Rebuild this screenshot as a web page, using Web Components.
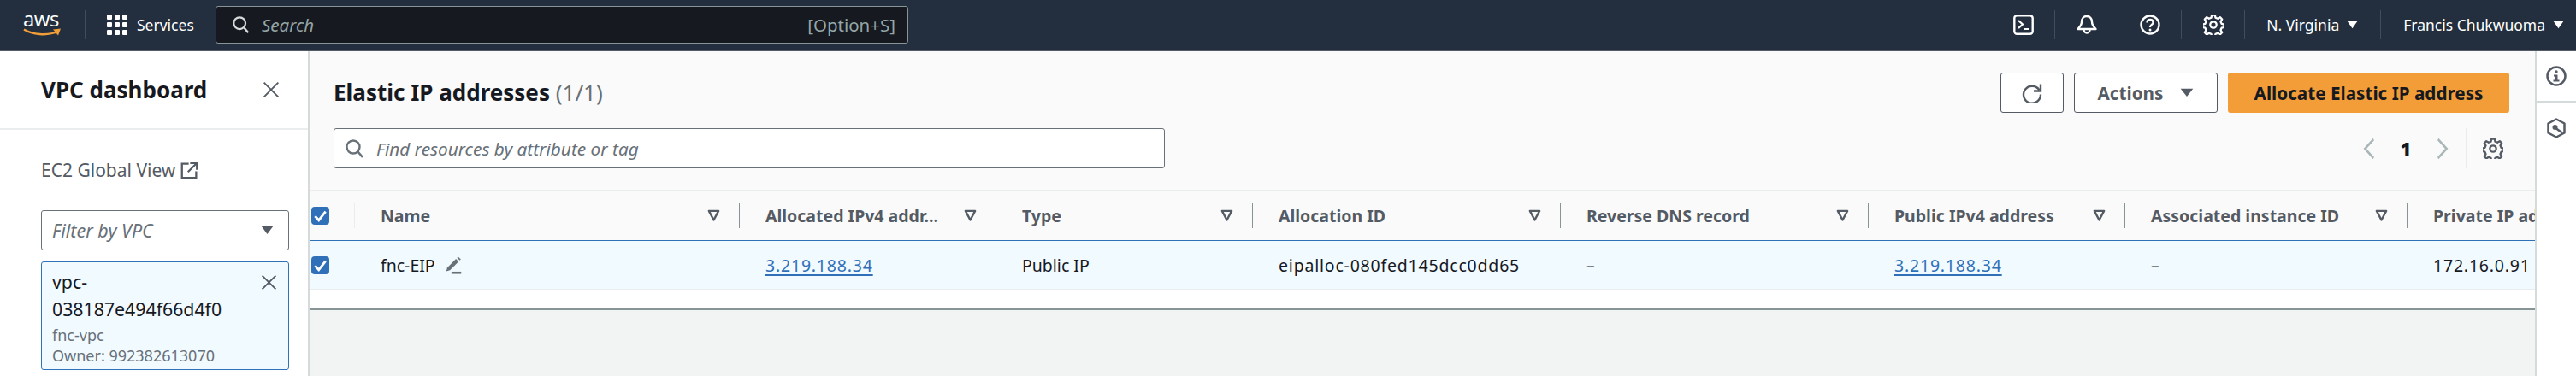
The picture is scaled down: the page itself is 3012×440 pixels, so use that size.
<!DOCTYPE html>
<html lang="en"><head><meta charset="utf-8"><title>Elastic IP addresses</title>
<style>
html,body{margin:0;padding:0;background:#fff}
body{width:3012px;height:440px;overflow:hidden;font-family:"Noto Sans","Open Sans",sans-serif;color:#16191f}
.app{display:flex;height:380px}
</style></head><body>
<aws-topbar></aws-topbar>
<div class="app">
  <side-nav></side-nav>
  <eip-main>
    <eip-table></eip-table>
  </eip-main>
  <tools-rail></tools-rail>
</div>
<script>
const ICONS={
 search:'<circle cx="10" cy="10" r="7.5" fill="none" stroke="currentColor" stroke-width="2.4"/><path d="M15.5 15.5 21 22" fill="none" stroke="currentColor" stroke-width="2.6"/>',
 close:'<path d="M2 2 22 22M22 2 2 22" fill="none" stroke="currentColor" stroke-width="2.3"/>',
 caret:'<path d="M1 3H23L12 19Z" fill="currentColor"/>',
 external:'<path d="M11 3H2V22H21V13M13 2H22V11M22 2 10 14" fill="none" stroke="currentColor" stroke-width="2.6"/>',
 gear:'<path d="M10.200 1.500h3.600l.7 3.100 2.600 1.100 2.700-1.700 2.400 2.500-1.700 2.700 1.100 2.600 3 .7v3.400l-3 .7-1.100 2.600 1.700 2.700-2.400 2.500-2.700-1.700-2.600 1.100-.7 3.100h-3.600l-.7-3.100-2.600-1.100-2.700 1.700-2.400-2.500 1.700-2.700-1.100-2.600-3-.7v-3.400l3-.7 1.100-2.600-1.700-2.700 2.400-2.500 2.700 1.700 2.600-1.100z" transform="translate(0 -.9)" fill="none" stroke="currentColor" stroke-width="2.300" stroke-linejoin="round"/><circle cx="12" cy="12" r="3.700" fill="none" stroke="currentColor" stroke-width="2.300"/>',
 terminal:'<rect x="1.300" y="1.300" width="21.400" height="21.400" rx="3" fill="none" stroke="currentColor" stroke-width="2.400"/><path d="M6 7l5 4.500-5 4.500M12.500 17H18" fill="none" stroke="currentColor" stroke-width="2.200"/>',
 bell:'<path d="M12 2c-4 0-6 3-6 6.500 0 4-2 6-4.500 8.500h21C20 14.500 18 12.500 18 8.500 18 5 16 2 12 2Z" fill="none" stroke="currentColor" stroke-width="2.400" stroke-linejoin="round"/><path d="M8.500 18a3.500 3.500 0 0 0 7 0" fill="none" stroke="currentColor" stroke-width="2.400"/>',
 help:'<circle cx="12" cy="12" r="10.500" fill="none" stroke="currentColor" stroke-width="2.400"/><path d="M8.500 9.500c0-2.200 1.500-3.500 3.500-3.500s3.500 1.300 3.500 3.200c0 2.800-3.500 2.800-3.500 5.800" fill="none" stroke="currentColor" stroke-width="2.300"/><circle cx="12" cy="18" r="1.500" fill="currentColor"/>',
 refresh:'<path d="M20.500 8.500A10 10 0 1 0 22 13.500" fill="none" stroke="currentColor" stroke-width="2.400"/><path d="M22 1.500V9.500H14" fill="none" stroke="currentColor" stroke-width="2.400"/>',
 left:'<path d="M20 1 5 12 20 23" fill="none" stroke="currentColor" stroke-width="3.200"/>',
 right:'<path d="M4 1 19 12 4 23" fill="none" stroke="currentColor" stroke-width="3.200"/>',
 filter:'<path d="M3 3H21L12 20Z" fill="none" stroke="currentColor" stroke-width="3.800" stroke-linejoin="round"/>',
 pencil:'<path d="M2 20l1.500-5L15 3.500l3.500 3.500L7 18.500Z" fill="currentColor"/><path d="M16.500 2l1.500-1.500 3.500 3.500L20 5.500Z" fill="currentColor"/><rect x="9" y="20.500" width="13" height="3" fill="currentColor"/>',
 info:'<circle cx="12" cy="12" r="10.500" fill="none" stroke="currentColor" stroke-width="2.500"/><circle cx="12" cy="7" r="1.700" fill="currentColor"/><path d="M9 10.500h4.500V16.500H15.500V18.500H8.500V16.500H10.500V12.500H9Z" fill="currentColor"/>',
 hex:'<path d="M12 1.500 21.500 6.500V17.500L12 22.500 2.500 17.500V6.500Z" fill="none" stroke="currentColor" stroke-width="2.500" stroke-linejoin="round"/><circle cx="10.500" cy="11" r="3" fill="currentColor"/><path d="M12 12.500 19 17.500" fill="none" stroke="currentColor" stroke-width="2.500"/>',
 grid:'<g fill="currentColor"><rect x="0" y="0" width="6" height="6" rx="1"/><rect x="9" y="0" width="6" height="6" rx="1"/><rect x="18" y="0" width="6" height="6" rx="1"/><rect x="0" y="9" width="6" height="6" rx="1"/><rect x="9" y="9" width="6" height="6" rx="1"/><rect x="18" y="9" width="6" height="6" rx="1"/><rect x="0" y="18" width="6" height="6" rx="1"/><rect x="9" y="18" width="6" height="6" rx="1"/><rect x="18" y="18" width="6" height="6" rx="1"/></g>',
 check:'<path d="M5 12.500 10 18 19 6.500" fill="none" stroke="#fff" stroke-width="3.200"/>'
};
class UiIcon extends HTMLElement{
 connectedCallback(){
  const s=this.getAttribute('size')||24,n=this.getAttribute('name');
  const w=this.getAttribute('w')||s,h=this.getAttribute('h')||s;
  this.attachShadow({mode:'open'}).innerHTML=`<style>:host{display:inline-flex;flex:none;line-height:0}svg{display:block}</style><svg width="${w}" height="${h}" viewBox="0 0 24 24" preserveAspectRatio="none" aria-hidden="true">${ICONS[n]||''}</svg>`;
 }
}
customElements.define('ui-icon',UiIcon);

class UiCheck extends HTMLElement{
 constructor(){super();this.attachShadow({mode:'open'}).innerHTML=`<style>:host{display:flex;width:21px;height:21px;border-radius:4px;background:#2f70b8}</style><ui-icon name="check" size="21"></ui-icon>`}
}
customElements.define('ui-check',UiCheck);

class AwsTopbar extends HTMLElement{
 constructor(){super();this.attachShadow({mode:'open'}).innerHTML=`<style>
 :host{display:flex;align-items:center;height:58px;border-bottom:2px solid #545b64;background:#232f3e;color:#fff;font:18px/24px "Noto Sans",sans-serif}
 .logo{width:99px;padding-left:27px;box-sizing:border-box;flex:none;display:flex;flex-direction:column}
 .aws{font:24px/22px "Open Sans",sans-serif;letter-spacing:-.5px;margin-top:-4px;width:46px}
 .sep{width:1px;height:34px;background:#414d5c;flex:none}
 .sv{display:flex;align-items:center;gap:11px;margin-left:25px;width:127px;flex:none;font-size:17.500px}
 .search{width:810px;height:44px;box-sizing:border-box;flex:none;background:#16191f;border:1px solid #879596;border-radius:3px;display:flex;align-items:center;padding:0 14px 0 18px;color:#d5dbdb}
 .search i{flex:1;color:#95a5a6;margin-left:13px;font-size:20.500px}
 .search b{font-weight:400;color:#95a5a6;font-size:20.500px}
 .gap{flex:1}
 .ic{display:flex;justify-content:center;flex:none;width:73px}
 .reg{display:flex;align-items:center;gap:9px;flex:none;font-size:17.500px}
 </style>
 <div class="logo"><span class="aws">aws</span><svg width="46" height="11" viewBox="0 0 46 11"><path d="M1 1.500C10 7 28 10 41 3.500" fill="none" stroke="#f29d38" stroke-width="2.400"/><path d="M36 1.500 45 .5 42 8.500" fill="#f29d38" transform="translate(-1 0)"/></svg></div>
 <span class="sep"></span>
 <div class="sv"><ui-icon name="grid" size="24"></ui-icon><span>Services</span></div>
 <div class="search"><ui-icon name="search" size="22"></ui-icon><i>Search</i><b>[Option+S]</b></div>
 <span class="gap"></span>
 <div class="ic" style="width:48px;justify-content:flex-start"><ui-icon name="terminal" size="24"></ui-icon></div><span class="sep"></span>
 <div class="ic"><ui-icon name="bell" size="24"></ui-icon></div><span class="sep"></span>
 <div class="ic"><ui-icon name="help" size="24"></ui-icon></div><span class="sep"></span>
 <div class="ic"><ui-icon name="gear" size="24"></ui-icon></div><span class="sep"></span>
 <div class="reg" style="margin-left:25px;width:133px"><span>N. Virginia</span><ui-icon name="caret" w="13" h="13"></ui-icon></div><span class="sep"></span>
 <div class="reg" style="margin-left:26px;margin-right:14px"><span>Francis Chukwuoma</span><ui-icon name="caret" w="13" h="13"></ui-icon></div>`}
}
customElements.define('aws-topbar',AwsTopbar);

class SideNav extends HTMLElement{
 constructor(){super();this.attachShadow({mode:'open'}).innerHTML=`<style>
 :host{display:block;width:362px;flex:none;box-sizing:border-box;border-right:2px solid #d5dbdb;background:#fff;overflow:hidden;font-family:"Noto Sans",sans-serif}
 .head{display:flex;justify-content:space-between;align-items:center;height:90px;padding:0 33px 0 48px;border-bottom:2px solid #eaeded}
 h2{margin:0;font-size:26px;font-weight:700;color:#16191f}
 .body{padding:0 22px 0 48px}
 .glob{display:flex;align-items:center;gap:6px;height:94px;color:#545b64;font-size:21px}
 .fb{display:flex;align-items:center;justify-content:space-between;height:47px;box-sizing:border-box;border:1px solid #687078;border-radius:3px;padding:0 17px 0 12px;font-style:italic;color:#687078;font-size:21.500px}
 .card{position:relative;margin-top:13px;height:127px;box-sizing:border-box;border:1px solid #2f72b8;border-radius:3px;background:#f1faff;padding:7px 12px;color:#16191f;font-size:21.300px;line-height:32px}
 .card small{display:block;font-size:18px;line-height:24px;color:#687078}
 .card small:first-of-type{margin-top:2px}
 .x{position:absolute;top:14px;right:13px;color:#545b64}
 </style>
 <div class="head"><h2>VPC dashboard</h2><ui-icon name="close" size="20" style="color:#545b64"></ui-icon></div>
 <div class="body">
  <div class="glob"><span>EC2 Global View</span><ui-icon name="external" size="21"></ui-icon></div>
  <div class="fb"><span>Filter by VPC</span><ui-icon name="caret" w="15" h="14" style="color:#545b64"></ui-icon></div>
  <div class="card">vpc-<br>038187e494f66d4f0<small>fnc-vpc</small><small>Owner: 992382613070</small><ui-icon class="x" name="close" size="19"></ui-icon></div>
 </div>`}
}
customElements.define('side-nav',SideNav);

class EipMain extends HTMLElement{
 constructor(){super();this.attachShadow({mode:'open'}).innerHTML=`<style>
 :host{display:flex;flex-direction:column;flex:1;min-width:0;background:#f2f3f3;overflow:hidden;font-family:"Noto Sans",sans-serif}
 .top{background:#fafafa;padding:25px 30px 25px 28px;border-bottom:1px solid #eaeded}
 .r1{display:flex;align-items:center;height:47px}
 h1{margin:-2px 0 0;font-size:26px;font-weight:700;flex:1;color:#16191f}
 h1 span{font-weight:400;color:#687078}
 .btn{box-sizing:border-box;height:47px;display:flex;align-items:center;justify-content:center;border:1px solid #545b64;border-radius:3px;background:#fff;color:#545b64;font-weight:700;font-size:20.700px;margin-left:12px}
 .pri{background:#f29d38;border:0;color:#16191f;width:329px}
 .r2{display:flex;align-items:center;height:47px;margin-top:18px;justify-content:space-between;padding-right:7px}
 .find{width:972px;height:47px;box-sizing:border-box;border:1px solid #687078;border-radius:3px;background:#fff;display:flex;align-items:center;gap:13px;padding:0 12px;color:#687078;font-size:20.800px;font-style:italic}
 .pg{display:flex;align-items:center;color:#aab7b8;height:47px;font-size:21px;font-weight:700}
 .pg b{color:#16191f;width:70px;text-align:center}
 .pg .g{margin-left:19px;border-left:1px solid #eaeded;height:47px;width:43px;display:flex;align-items:center;justify-content:flex-end;color:#545b64}
 </style>
 <div class="top">
  <div class="r1"><h1>Elastic IP addresses <span>(1/1)</span></h1>
   <div class="btn" style="width:74px"><ui-icon name="refresh" size="24"></ui-icon></div>
   <div class="btn" style="width:168px;gap:20px">Actions<ui-icon name="caret" w="16" h="14"></ui-icon></div>
   <div class="btn pri">Allocate Elastic IP address</div></div>
  <div class="r2"><div class="find"><ui-icon name="search" size="24"></ui-icon><span>Find resources by attribute or tag</span></div>
   <div class="pg"><ui-icon name="left" w="16" h="24"></ui-icon><b>1</b><ui-icon name="right" w="16" h="24"></ui-icon><div class="g"><ui-icon name="gear" size="24"></ui-icon></div></div></div>
 </div>
 <slot></slot>`}
}
customElements.define('eip-main',EipMain);

class EipTh extends HTMLElement{
 constructor(){super();this.attachShadow({mode:'open'}).innerHTML=`<style>
 :host{display:flex;align-items:center;justify-content:space-between;height:30px;min-width:0;padding:0 22px 0 30px;border-right:1px solid #879596;font-weight:700;font-size:19.500px;color:#545b64;white-space:nowrap}
 </style><slot></slot><ui-icon name="filter" size="15" style="color:#545b64"></ui-icon>`}
}
customElements.define('eip-th',EipTh);

class EipTable extends HTMLElement{
 constructor(){super();this.attachShadow({mode:'open'}).innerHTML=`<style>
 :host{display:block;background:#fff;height:140px;box-sizing:border-box;border-bottom:2px solid #879596;overflow:hidden;font-family:"Noto Sans",sans-serif}
 .grid{display:grid;grid-template-columns:53px 450px 300px 300px 360px 360px 300px 330px 300px}
 .hw{display:flex;align-items:center;height:58px;background:#fafafa;border-bottom:2px solid #d5dbdb}
 .hw>*{width:100%}
 .first{height:30px;display:flex;align-items:center;padding-left:2px;box-sizing:border-box;border-right:1px solid #eaeded}
 .d{height:56px;display:flex;align-items:center;background:#f1faff;border-top:1px solid #2f72b8;border-bottom:1px solid #eaeded;padding-left:30px;font-size:19.500px;color:#16191f;margin-top:-2px;white-space:nowrap}
 .d.c{padding-left:2px}
 .n{letter-spacing:.8px}
 a{color:#2f70b8;text-decoration:underline;text-decoration-thickness:2px;text-underline-offset:3px}
 </style>
 <div class="grid">
 <div class="hw"><div class="first"><ui-check></ui-check></div></div>
 <div class="hw"><eip-th>Name</eip-th></div>
 <div class="hw"><eip-th>Allocated IPv4 addr...</eip-th></div>
 <div class="hw"><eip-th>Type</eip-th></div>
 <div class="hw"><eip-th>Allocation ID</eip-th></div>
 <div class="hw"><eip-th>Reverse DNS record</eip-th></div>
 <div class="hw"><eip-th>Public IPv4 address</eip-th></div>
 <div class="hw"><eip-th>Associated instance ID</eip-th></div>
 <div class="hw"><span style="padding-left:30px;font-weight:700;font-size:19.500px;color:#545b64;white-space:nowrap;overflow:hidden">Private IP address</span></div>
 <div class="d c"><ui-check></ui-check></div>
 <div class="d" style="gap:11px">fnc-EIP<ui-icon name="pencil" size="21" style="color:#687078"></ui-icon></div>
 <div class="d"><a class="n">3.219.188.34</a></div>
 <div class="d">Public IP</div>
 <div class="d n">eipalloc-080fed145dcc0dd65</div>
 <div class="d">–</div>
 <div class="d"><a class="n">3.219.188.34</a></div>
 <div class="d">–</div>
 <div class="d n">172.16.0.91</div>
 </div>`}
}
customElements.define('eip-table',EipTable);

class ToolsRail extends HTMLElement{
 constructor(){super();this.attachShadow({mode:'open'}).innerHTML=`<style>
 :host{display:block;width:48px;flex:none;box-sizing:border-box;border-left:2px solid #d5dbdb;background:#fff;color:#545b64}
 .t{display:flex;justify-content:center}
 .a{height:60px;align-items:center;border-bottom:2px solid #d5dbdb;box-sizing:border-box}
 .b{padding-top:18px}
 </style><div class="t a"><ui-icon name="info" size="24"></ui-icon></div><div class="t b"><ui-icon name="hex" size="24"></ui-icon></div>`}
}
customElements.define('tools-rail',ToolsRail);
</script>
</body></html>
